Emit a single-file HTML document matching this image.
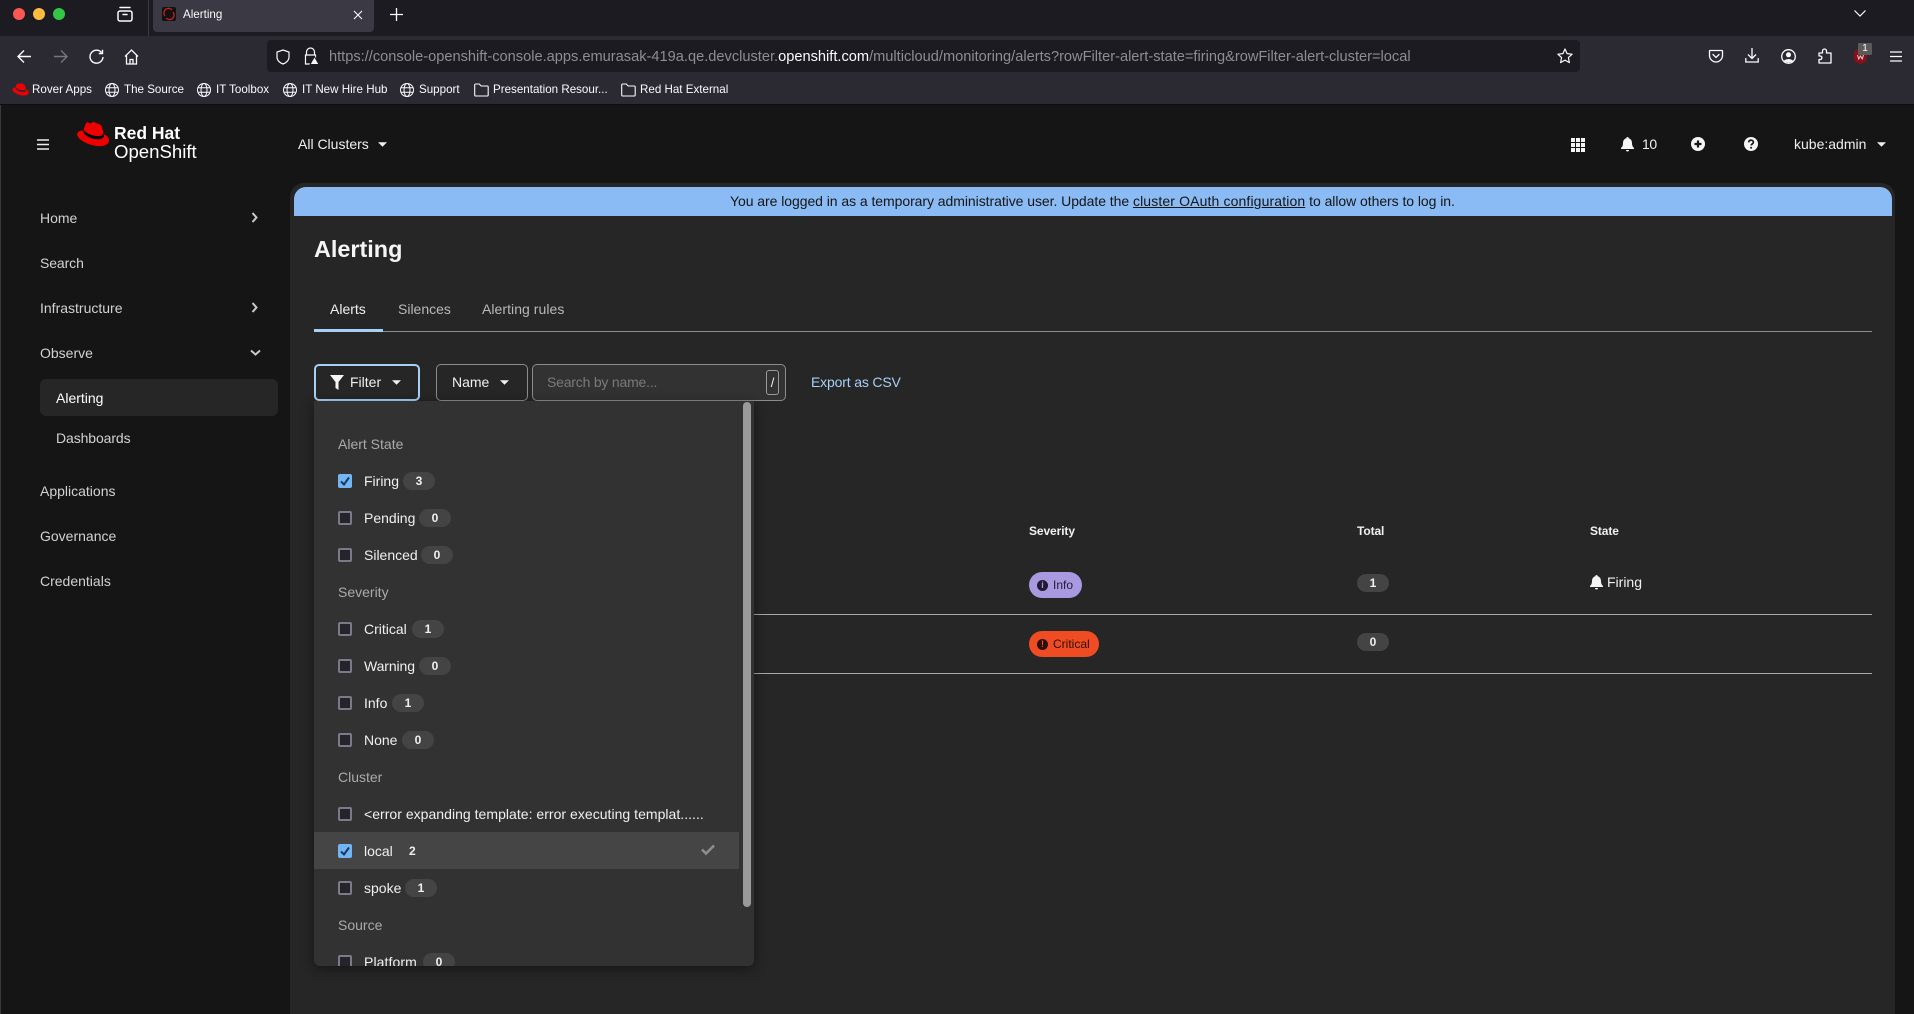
<!DOCTYPE html>
<html lang="en"><head><meta charset="utf-8"><title>Alerting</title>
<style>
*{box-sizing:border-box}
html,body{margin:0;padding:0;width:1914px;height:1014px;overflow:hidden;background:#151515;font-family:"Liberation Sans",sans-serif}
.a{position:absolute}
.t{position:absolute;white-space:nowrap;line-height:20px;height:20px;margin-top:-10px;font-size:14px;color:#f0f0f0}
svg{position:absolute;overflow:visible}
.ui{fill:none;stroke:#fbfbfe;stroke-width:1.5;stroke-linecap:round;stroke-linejoin:round}
.bm{font-size:11.6px;color:#fbfbfe}
.nav{color:#d2d2d2;font-size:14px}
.cb{position:absolute;left:338px;width:14px;height:14px;margin-top:-7px;background:#25242b;border:2px solid #7c7a8a;border-radius:2px}
.cb.on{background:#73b5f2;border:0}
.bd{position:absolute;height:18px;width:32px;margin-top:-9px;border-radius:9px;background:#444;color:#f0f0f0;font-size:12px;line-height:18px;text-align:center;font-weight:bold}
.gl{color:#aaa;font-size:14px}
</style></head>
<body>
<!-- Browser tab strip -->
<div class="a" style="left:0;top:0;width:1914px;height:36px;background:#1c1b22"></div>
<div class="a" style="left:13px;top:8px;width:12px;height:12px;border-radius:50%;background:#fc5753"></div>
<div class="a" style="left:33px;top:8px;width:12px;height:12px;border-radius:50%;background:#fdbc40"></div>
<div class="a" style="left:53px;top:8px;width:12px;height:12px;border-radius:50%;background:#33c748"></div>
<svg style="left:117px;top:6px" width="16" height="16" viewBox="0 0 16 16"><g class="ui"><rect x="1" y="5" width="14" height="10" rx="2"/><path d="M3 1.500h10M6 8.500h4"/></g></svg>
<div class="a" style="left:148px;top:0;width:1px;height:36px;background:#3a3944"></div>
<div class="a" style="left:153px;top:0;width:221px;height:32px;background:#3a3944;border-radius:0 0 4px 4px"></div>
<div class="a" style="left:162px;top:7px;width:14px;height:14px;background:#111;border-radius:2px"></div>
<svg style="left:162px;top:7px" width="14" height="14" viewBox="0 0 14 14"><path d="M3 9a4.500 4.500 0 0 1 7-6M11 5a4.500 4.500 0 0 1-7 6" fill="none" stroke="#c22" stroke-width="1.300"/></svg>
<span class="t" style="left:183px;top:15px;font-size:11.600px;color:#fbfbfe">Alerting</span>
<svg style="left:353px;top:10px" width="10" height="10" viewBox="0 0 10 10"><path d="M1 1l8 8M9 1l-8 8" fill="none" stroke="#fbfbfe" stroke-width="1.100"/></svg>
<svg style="left:390px;top:8px" width="13" height="13" viewBox="0 0 13 13"><path d="M6.500 0v13M0 6.500h13" fill="none" stroke="#fbfbfe" stroke-width="1.300"/></svg>
<svg style="left:1854px;top:10px" width="12" height="7" viewBox="0 0 12 7"><path d="M.5.500L6 6l5.500-5.500" fill="none" stroke="#fbfbfe" stroke-width="1.200"/></svg>

<!-- Toolbar -->
<div class="a" style="left:0;top:36px;width:1914px;height:68px;background:#2b2a33"></div>
<div class="a" style="left:0;top:104px;width:1914px;height:1px;background:#0f0f10"></div>
<svg style="left:17px;top:49px" width="15" height="15" viewBox="0 0 15 15"><path d="M14 7.500H1M7 1.500l-6 6 6 6" fill="none" stroke="#fbfbfe" stroke-width="1.400"/></svg>
<svg style="left:53px;top:49px" width="15" height="15" viewBox="0 0 15 15"><path d="M1 7.500h13M8 1.500l6 6-6 6" fill="none" stroke="#77767e" stroke-width="1.400"/></svg>
<svg style="left:89px;top:49px" width="15" height="15" viewBox="0 0 15 15"><path d="M12.500 3.500A6.500 6.500 0 1 0 14 8M13.500.8v3.700H9.800" fill="none" stroke="#fbfbfe" stroke-width="1.400"/></svg>
<svg style="left:124px;top:49px" width="15" height="16" viewBox="0 0 15 16"><path d="M1 7.500L7.500 1 14 7.500M2.500 6.500V15h10V6.500M6 15v-4.500h3V15" fill="none" stroke="#fbfbfe" stroke-width="1.300"/></svg>
<div class="a" style="left:267px;top:40px;width:1313px;height:32px;background:#1c1b22;border-radius:4px"></div>
<svg style="left:276px;top:49px" width="14" height="16" viewBox="0 0 14 16"><path d="M7 1l6 2v5c0 3.500-3 6-6 7-3-1-6-3.500-6-7V3z" fill="none" stroke="#fbfbfe" stroke-width="1.200"/></svg>
<svg style="left:303px;top:47px" width="16" height="18" viewBox="0 0 16 18"><path d="M3.500 8V5a4 4 0 0 1 8 0v3M2.500 8h10v9h-10z" fill="none" stroke="#fbfbfe" stroke-width="1.200"/><path d="M11.500 9.500l4.500 8H7z" fill="#fbfbfe" stroke="#1c1b22"/></svg>
<span class="t" id="url" style="left:329px;top:57px;font-size:14.620px;color:#8e8d93">https://console-openshift-console.apps.emurasak-419a.qe.devcluster.<span style="color:#fbfbfe">openshift.com</span>/multicloud/monitoring/alerts?rowFilter-alert-state=firing&amp;rowFilter-alert-cluster=local</span>
<svg style="left:1557px;top:48px" width="16" height="16" viewBox="0 0 16 16"><path d="M8 1l2.100 4.600 5 .6-3.700 3.400 1 5L8 12.100 3.600 14.600l1-5L.9 6.200l5-.6z" fill="none" stroke="#fbfbfe" stroke-width="1.200" stroke-linejoin="round"/></svg>
<svg style="left:1709px;top:49px" width="14" height="14" viewBox="0 0 14 14"><path d="M1 1.500h12a.5.500 0 0 1 .5.500v4.500c0 3.500-3 6.500-6.500 6.500S.5 10 .5 6.500V2A.5.500 0 0 1 1 1.500zM4 5.500l3 3 3-3" fill="none" stroke="#fbfbfe" stroke-width="1.300" stroke-linecap="round"/></svg>
<svg style="left:1745px;top:48px" width="14" height="15" viewBox="0 0 14 15"><path d="M7 0v10M3 6.500L7 10.500l4-4M.8 10v4h12.400v-4" fill="none" stroke="#fbfbfe" stroke-width="1.300"/></svg>
<svg style="left:1781px;top:49px" width="15" height="15" viewBox="0 0 15 15"><circle cx="7.500" cy="7.500" r="6.800" fill="none" stroke="#fbfbfe" stroke-width="1.300"/><circle cx="7.500" cy="5.800" r="2.500" fill="#fbfbfe"/><path d="M3 12c1-2.500 8-2.500 9 0-2 2-7 2-9 0z" fill="#fbfbfe"/></svg>
<svg style="left:1818px;top:48px" width="14" height="16" viewBox="0 0 14 16"><path d="M1 5h3.500V3a2 2 0 0 1 4 0v2H13v10H1v-3.500h1.500a1.800 1.800 0 0 0 0-3.500H1z" fill="none" stroke="#fbfbfe" stroke-width="1.300" stroke-linejoin="round"/></svg>
<svg style="left:1854px;top:49px" width="13" height="15" viewBox="0 0 13 15"><path d="M6.500 0l6.500 2v7c0 3-3 5-6.500 6C3 14 0 12 0 9V2z" fill="#8a0f18"/><path d="M3.500 6l1.200 4 1.800-3 1.800 3L9.500 6" fill="none" stroke="#e8d0d0" stroke-width="1"/></svg>
<div class="a" style="left:1858px;top:43px;width:14px;height:12px;background:#5b5b5b;border-radius:1px;color:#fff;font-size:10px;line-height:12px;text-align:center">1</div>
<svg style="left:1890px;top:51px" width="12" height="11" viewBox="0 0 12 11"><path d="M0 1h12M0 5.500h12M0 10h12" stroke="#fbfbfe" stroke-width="1.300"/></svg>

<!-- Bookmarks -->
<svg style="left:12px;top:83px" width="17" height="13" viewBox="0 0 32 24"><path fill="#e00" d="M21 13.500c2 0 5-.4 5-2.800 0-.2 0-.4-.1-.5L24.700 5c-.3-1.200-.5-1.700-2.600-2.800C20.500 1.400 17 0 16 0c-1 0-1.200 1.300-2.300 1.300C12.600 1.300 11.800.4 10.800.4c-1 0-1.600.7-2.100 2 0 0-1.400 4-1.600 4.600 0 .1 0 .2 0 .3 0 1.500 6 6.200 13.900 6.200z"/><path fill="#e00" d="M26.300 11.600c.3 1.300.3 1.500.3 1.600 0 2.200-2.500 3.500-5.800 3.500-7.500 0-14-4.400-14-7.300 0-.4.100-.8.200-1.200C4.300 8.300.8 8.800.8 11.900c0 5.100 12 11.300 21.500 11.300 7.300 0 9.100-3.300 9.100-5.900 0-2-1.700-4.300-5.100-5.700z"/></svg>
<span class="t bm" style="left:32px;top:90px">Rover Apps</span>
<svg style="left:105px;top:83px" width="14" height="14" viewBox="0 0 14 14"><g fill="none" stroke="#fbfbfe"><circle cx="7" cy="7" r="6.500"/><ellipse cx="7" cy="7" rx="3" ry="6.500"/><path d="M1 4.700h12M1 9.300h12"/></g></svg>
<span class="t bm" style="left:124px;top:90px">The Source</span>
<svg style="left:197px;top:83px" width="14" height="14" viewBox="0 0 14 14"><g fill="none" stroke="#fbfbfe"><circle cx="7" cy="7" r="6.500"/><ellipse cx="7" cy="7" rx="3" ry="6.500"/><path d="M1 4.700h12M1 9.300h12"/></g></svg>
<span class="t bm" style="left:216px;top:90px">IT Toolbox</span>
<svg style="left:283px;top:83px" width="14" height="14" viewBox="0 0 14 14"><g fill="none" stroke="#fbfbfe"><circle cx="7" cy="7" r="6.500"/><ellipse cx="7" cy="7" rx="3" ry="6.500"/><path d="M1 4.700h12M1 9.300h12"/></g></svg>
<span class="t bm" style="left:302px;top:90px">IT New Hire Hub</span>
<svg style="left:400px;top:83px" width="14" height="14" viewBox="0 0 14 14"><g fill="none" stroke="#fbfbfe"><circle cx="7" cy="7" r="6.500"/><ellipse cx="7" cy="7" rx="3" ry="6.500"/><path d="M1 4.700h12M1 9.300h12"/></g></svg>
<span class="t bm" style="left:419px;top:90px">Support</span>
<svg style="left:474px;top:83px" width="15" height="14" viewBox="0 0 15 14"><path d="M.7 2A1 1 0 0 1 1.700 1h3.500l2 2h6a1 1 0 0 1 1 1v8a1 1 0 0 1-1 1H1.700a1 1 0 0 1-1-1z" fill="none" stroke="#fbfbfe" stroke-width="1.100"/></svg>
<span class="t bm" style="left:493px;top:90px">Presentation Resour...</span>
<svg style="left:621px;top:83px" width="15" height="14" viewBox="0 0 15 14"><path d="M.7 2A1 1 0 0 1 1.700 1h3.500l2 2h6a1 1 0 0 1 1 1v8a1 1 0 0 1-1 1H1.700a1 1 0 0 1-1-1z" fill="none" stroke="#fbfbfe" stroke-width="1.100"/></svg>
<span class="t bm" style="left:640px;top:90px">Red Hat External</span>

<!-- Page left edge -->
<div class="a" style="left:0;top:105px;width:1px;height:909px;background:#3a3a3a"></div>

<!-- Masthead -->
<svg style="left:37px;top:139px" width="12" height="11" viewBox="0 0 12 11"><path d="M0 1h12M0 5.500h12M0 10h12" stroke="#f0f0f0" stroke-width="1.500"/></svg>
<svg style="left:76px;top:122px" width="34" height="25" viewBox="0 0 32 24"><path fill="#000" d="M7 7l19 3 1 4-10 2-10-5z"/><path fill="#e00" d="M21 13.500c2 0 5-.4 5-2.800 0-.2 0-.4-.1-.5L24.700 5c-.3-1.200-.5-1.700-2.600-2.800C20.500 1.400 17 0 16 0c-1 0-1.200 1.300-2.300 1.300C12.600 1.300 11.800.4 10.800.4c-1 0-1.600.7-2.100 2 0 0-1.400 4-1.600 4.600 0 .1 0 .2 0 .3 0 1.500 6 6.200 13.900 6.200z"/><path fill="#e00" d="M26.300 11.600c.3 1.300.3 1.500.3 1.600 0 2.200-2.500 3.500-5.800 3.500-7.500 0-14-4.400-14-7.300 0-.4.100-.8.200-1.200C4.300 8.300.8 8.800.8 11.900c0 5.100 12 11.300 21.500 11.300 7.300 0 9.100-3.300 9.100-5.900 0-2-1.700-4.300-5.100-5.700z"/></svg>
<span class="t" style="left:114px;top:133px;font-size:17.500px;font-weight:bold;color:#fff">Red Hat</span>
<span class="t" style="left:114px;top:152px;font-size:18.600px;color:#fff">OpenShift</span>
<span class="t" style="left:298px;top:144px;color:#f0f0f0">All Clusters</span>
<svg style="left:378px;top:142px" width="9" height="5" viewBox="0 0 10 5"><path d="M0 0h10L5 5z" fill="#f0f0f0"/></svg>
<svg style="left:1571px;top:138px" width="14" height="14" viewBox="0 0 14 14"><path fill="#f5f5f5" d="M0 0h4v4H0zM5 0h4v4H5zM10 0h4v4h-4zM0 5h4v4H0zM5 5h4v4H5zM10 5h4v4h-4zM0 10h4v4H0zM5 10h4v4H5zM10 10h4v4h-4z"/></svg>
<svg style="left:1621px;top:137px" width="13" height="15" viewBox="0 0 13 15"><path fill="#f5f5f5" d="M6.500 0c.7 0 1.200.5 1.200 1.200C10 1.800 11 3.800 11 6c0 3 1 4 2 5v1H0v-1c1-1 2-2 2-5 0-2.200 1-4.200 3.300-4.800C5.300.5 5.800 0 6.500 0zM5 13h3a1.500 1.500 0 0 1-3 0z"/></svg>
<span class="t" style="left:1642px;top:144px;color:#f0f0f0;letter-spacing:-.4px">10</span>
<svg style="left:1691px;top:137px" width="14" height="14" viewBox="0 0 14 14"><circle cx="7" cy="7" r="7" fill="#f5f5f5"/><path d="M3.500 7h7M7 3.500v7" stroke="#151515" stroke-width="2.200"/></svg>
<svg style="left:1744px;top:137px" width="14" height="14" viewBox="0 0 14 14"><circle cx="7" cy="7" r="7" fill="#f5f5f5"/><path d="M4.700 5.300C4.800 3.900 5.800 3.200 7 3.200c1.300 0 2.400.8 2.400 2 0 1.700-2.200 1.700-2.200 3.200" fill="none" stroke="#151515" stroke-width="1.700"/><circle cx="7.100" cy="10.700" r="1" fill="#151515"/></svg>
<span class="t" style="left:1794px;top:144px;color:#f0f0f0">kube:admin</span>
<svg style="left:1877px;top:142px" width="9" height="5" viewBox="0 0 10 5"><path d="M0 0h10L5 5z" fill="#f0f0f0"/></svg>

<!-- Sidebar -->
<span class="t nav" style="left:40px;top:218px">Home</span>
<svg style="left:251px;top:212px" width="7" height="11" viewBox="0 0 7 11"><path d="M1.500 1L5.500 5.500 1.500 10" fill="none" stroke="#c8c8c8" stroke-width="2"/></svg>
<span class="t nav" style="left:40px;top:263px;letter-spacing:-.1px">Search</span>
<span class="t nav" style="left:40px;top:308px">Infrastructure</span>
<svg style="left:251px;top:302px" width="7" height="11" viewBox="0 0 7 11"><path d="M1.500 1L5.500 5.500 1.500 10" fill="none" stroke="#c8c8c8" stroke-width="2"/></svg>
<span class="t nav" style="left:40px;top:353px">Observe</span>
<svg style="left:250px;top:349px" width="11" height="7" viewBox="0 0 11 7"><path d="M1 1.500L5.500 5.500 10 1.500" fill="none" stroke="#c8c8c8" stroke-width="2"/></svg>
<div class="a" style="left:40px;top:379px;width:238px;height:37px;background:#262626;border-radius:6px"></div>
<span class="t nav" style="left:56px;top:398px;color:#fff">Alerting</span>
<span class="t nav" style="left:56px;top:438px;letter-spacing:-.1px">Dashboards</span>
<span class="t nav" style="left:40px;top:491px">Applications</span>
<span class="t nav" style="left:40px;top:536px">Governance</span>
<span class="t nav" style="left:40px;top:581px">Credentials</span>

<!-- Main -->
<div class="a" style="left:290px;top:183px;width:1605px;height:831px;background:#262626;border-radius:14px 14px 0 0"></div>
<div class="a" style="left:294px;top:187px;width:1598px;height:29px;background:#8abbf4;border-radius:12px 12px 0 0"></div>
<span class="t" style="left:730px;top:201px;color:#151515;letter-spacing:-.055px">You are logged in as a temporary administrative user. Update the <u style="letter-spacing:.13px">cluster OAuth configuration</u> to allow others to log in.</span>
<span class="t" style="left:314px;top:249px;font-size:23.400px;font-weight:bold;color:#f5f5f5;height:30px;line-height:30px;margin-top:-15px;">Alerting</span>

<span class="t" style="left:330px;top:309px;color:#f0f0f0">Alerts</span>
<span class="t" style="left:398px;top:309px;color:#b8b8b8">Silences</span>
<span class="t" style="left:482px;top:309px;color:#b8b8b8;letter-spacing:.05px">Alerting rules</span>
<div class="a" style="left:314px;top:331px;width:1558px;height:1px;background:#8a8d90"></div>
<div class="a" style="left:314px;top:329px;width:69px;height:3px;background:#a6d0f5"></div>

<div class="a" style="left:314px;top:364px;width:106px;height:37px;border:2px solid #a6d0f5;border-radius:5px"></div>
<svg style="left:330px;top:375px" width="14" height="15" viewBox="0 0 14 15"><path fill="#f5f5f5" d="M0 0h14L8.500 7v8L5.500 13V7z"/></svg>
<span class="t" style="left:350px;top:382px;color:#f0f0f0">Filter</span>
<svg style="left:392px;top:380px" width="9" height="5" viewBox="0 0 10 5"><path d="M0 0h10L5 5z" fill="#f0f0f0"/></svg>
<div class="a" style="left:436px;top:364px;width:92px;height:37px;border:1px solid #8a8d90;border-radius:5px"></div>
<span class="t" style="left:452px;top:382px;color:#f0f0f0">Name</span>
<svg style="left:500px;top:380px" width="9" height="5" viewBox="0 0 10 5"><path d="M0 0h10L5 5z" fill="#f0f0f0"/></svg>
<div class="a" style="left:532px;top:364px;width:254px;height:37px;border:1px solid #8a8d90;border-radius:5px;background:#323232"></div>
<span class="t" style="left:547px;top:382px;color:#7a7a7a;letter-spacing:-.2px">Search by name...</span>
<div class="a" style="left:766px;top:370px;width:13px;height:25px;border:1px solid #9a9a9a;border-radius:3px;color:#f0f0f0;font-size:13px;line-height:23px;text-align:center">/</div>
<span class="t" style="left:811px;top:382px;color:#a6d0f5;letter-spacing:-.16px">Export as CSV</span>

<!-- Table -->
<span class="t" style="left:1029px;top:531px;font-size:12px;font-weight:bold;color:#f0f0f0;letter-spacing:-.1px">Severity</span>
<span class="t" style="left:1357px;top:531px;font-size:12px;font-weight:bold;color:#f0f0f0;letter-spacing:-.1px">Total</span>
<span class="t" style="left:1590px;top:531px;font-size:12px;font-weight:bold;color:#f0f0f0;letter-spacing:-.1px">State</span>
<div class="a" style="left:1029px;top:572px;width:53px;height:26px;border-radius:13px;background:#a899e0"></div>
<div class="a" style="left:1037px;top:580px;width:11px;height:11px;border-radius:50%;background:#1f1b33;color:#a899e0;font-size:9px;line-height:11px;text-align:center;font-weight:bold">i</div>
<span class="t" style="left:1053px;top:585px;font-size:12px;color:#1f1b33">Info</span>
<div class="a" style="left:1029px;top:631px;width:70px;height:26px;border-radius:13px;background:#f04c24"></div>
<div class="a" style="left:1037px;top:639px;width:11px;height:11px;border-radius:50%;background:#2b0e06;color:#f04c24;font-size:9px;line-height:11px;text-align:center;font-weight:bold">!</div>
<span class="t" style="left:1053px;top:644px;font-size:12px;color:#2b0e06">Critical</span>
<div class="bd" style="left:1357px;top:583px">1</div>
<div class="bd" style="left:1357px;top:642px">0</div>
<svg style="left:1590px;top:575px" width="13" height="15" viewBox="0 0 13 15"><path fill="#f5f5f5" d="M6.500 0c.7 0 1.200.5 1.200 1.200C10 1.800 11 3.800 11 6c0 3 1 4 2 5v1H0v-1c1-1 2-2 2-5 0-2.200 1-4.200 3.300-4.800C5.300.5 5.800 0 6.500 0zM5 13h3a1.500 1.500 0 0 1-3 0z"/></svg>
<span class="t" style="left:1607px;top:582px;color:#f0f0f0">Firing</span>
<div class="a" style="left:754px;top:614px;width:1118px;height:1px;background:#a8a8a8"></div>
<div class="a" style="left:754px;top:673px;width:1118px;height:1px;background:#a8a8a8"></div>

<!-- Dropdown -->
<div class="a" style="left:314px;top:401px;width:440px;height:565px;background:#323232;border-radius:0 0 6px 6px;box-shadow:0 3px 12px rgba(0,0,0,.45);overflow:hidden">
  <div class="a" style="left:0;top:431px;width:425px;height:37px;background:#454545"></div>
  <div class="a" style="left:429px;top:1px;width:8px;height:505px;background:#9a9a9a;border-radius:4px"></div>
  <div style="position:absolute;left:-314px;top:-401px;width:1000px;height:1014px">
    <span class="t gl" style="left:338px;top:444px">Alert State</span>
    <div class="cb on" style="top:481px"></div><svg style="left:340px;top:476px" width="10" height="10" viewBox="0 0 10 10"><path d="M1 5.500L4 8.500 9 1.500" fill="none" stroke="#16395e" stroke-width="2"/></svg>
    <span class="t" style="left:364px;top:481px">Firing</span><div class="bd" style="left:403px;top:481px">3</div>
    <div class="cb" style="top:518px"></div><span class="t" style="left:364px;top:518px">Pending</span><div class="bd" style="left:419px;top:518px">0</div>
    <div class="cb" style="top:555px"></div><span class="t" style="left:364px;top:555px">Silenced</span><div class="bd" style="left:421px;top:555px">0</div>
    <span class="t gl" style="left:338px;top:592px">Severity</span>
    <div class="cb" style="top:629px"></div><span class="t" style="left:364px;top:629px">Critical</span><div class="bd" style="left:412px;top:629px">1</div>
    <div class="cb" style="top:666px"></div><span class="t" style="left:364px;top:666px;letter-spacing:-.1px">Warning</span><div class="bd" style="left:419px;top:666px">0</div>
    <div class="cb" style="top:703px"></div><span class="t" style="left:364px;top:703px">Info</span><div class="bd" style="left:392px;top:703px">1</div>
    <div class="cb" style="top:740px"></div><span class="t" style="left:364px;top:740px">None</span><div class="bd" style="left:402px;top:740px">0</div>
    <span class="t gl" style="left:338px;top:777px">Cluster</span>
    <div class="cb" style="top:814px"></div><span class="t" style="left:364px;top:814px;letter-spacing:.03px">&lt;error expanding template: error executing templat......</span>
    <div class="cb on" style="top:851px"></div><svg style="left:340px;top:846px" width="10" height="10" viewBox="0 0 10 10"><path d="M1 5.500L4 8.500 9 1.500" fill="none" stroke="#16395e" stroke-width="2"/></svg>
    <span class="t" style="left:364px;top:851px">local</span><span class="t" style="left:409px;top:851px;font-size:12px;font-weight:bold">2</span>
    <svg style="left:701px;top:844px" width="14" height="11" viewBox="0 0 14 11"><path d="M1 5.500L5 9.500 13 1.500" fill="none" stroke="#8e8e8e" stroke-width="2.600"/></svg>
    <div class="cb" style="top:888px"></div><span class="t" style="left:364px;top:888px">spoke</span><div class="bd" style="left:405px;top:888px">1</div>
    <span class="t gl" style="left:338px;top:925px">Source</span>
    <div class="cb" style="top:962px"></div><span class="t" style="left:364px;top:962px;letter-spacing:.1px">Platform</span><div class="bd" style="left:423px;top:962px">0</div>
  </div>
</div>
</body></html>
